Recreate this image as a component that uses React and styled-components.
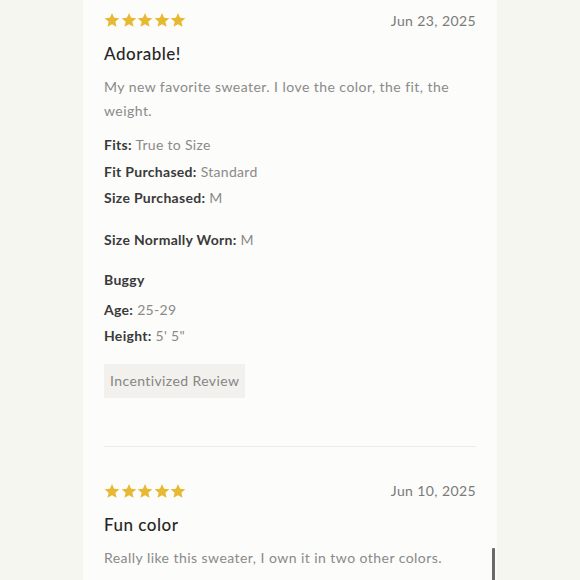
import React from "react";
import styled, { createGlobalStyle } from "styled-components";

const GlobalStyle = createGlobalStyle`
  html, body {
    margin: 0;
    padding: 0;
    background: #f6f6f1;
  }
  body {
    font-family: Lato, "Open Sans", sans-serif;
    overflow: hidden;
  }
`;

const reviews = [
  {
    date: "Jun 23, 2025",
    title: "Adorable!",
    body: "My new favorite sweater. I love the color, the fit, the weight.",
    fit: [
      ["Fits", "True to Size"],
      ["Fit Purchased", "Standard"],
      ["Size Purchased", "M"],
    ],
    worn: "M",
    author: "Buggy",
    age: "25-29",
    height: "5' 5\"",
    badge: "Incentivized Review",
  },
  {
    date: "Jun 10, 2025",
    title: "Fun color",
    body: "Really like this sweater, I own it in two other colors.",
  },
];

const Star = () => (
  <svg width="16" height="16" viewBox="0 0 24 24">
    <path
      d="M12 1.5l3.1 7.2 7.9.7-6 5.2 1.8 7.7L12 18.3l-6.8 4 1.8-7.7-6-5.2 7.9-.7z"
      fill="#e7b933"
    />
  </svg>
);

const Review = ({ review, first }) => (
  <Item $first={first}>
    <TopRow>
      <Stars>
        {[0, 1, 2, 3, 4].map((i) => (
          <Star key={i} />
        ))}
      </Stars>
      <DateText>{review.date}</DateText>
    </TopRow>
    <Title>{review.title}</Title>
    <Body>{review.body}</Body>
    {review.fit && (
      <>
        <Attrs $gap={9}>
          {review.fit.map(([k, v]) => (
            <Attr key={k}>
              <b>{k}:</b> <span>{v}</span>
            </Attr>
          ))}
        </Attrs>
        <Attrs $gap={15.5}>
          <Attr>
            <b>Size Normally Worn:</b> <span>{review.worn}</span>
          </Attr>
        </Attrs>
        <Attrs $gap={13.5}>
          <Attr>
            <b>{review.author}</b>
          </Attr>
        </Attrs>
        <Attrs $gap={3}>
          <Attr>
            <b>Age:</b> <span>{review.age}</span>
          </Attr>
          <Attr>
            <b>Height:</b> <span>{review.height}</span>
          </Attr>
        </Attrs>
        <Badge>{review.badge}</Badge>
      </>
    )}
  </Item>
);

const App = () => (
  <>
    <GlobalStyle />
    <Page>
      <Card>
        {reviews.map((r, i) => (
          <Review key={r.date} review={r} first={i === 0} />
        ))}
      </Card>
      <ScrollThumb />
    </Page>
  </>
);

const Page = styled.div`
  position: relative;
  width: 580px;
  height: 580px;
  overflow: hidden;
  display: flex;
  justify-content: center;
`;

const Card = styled.div`
  width: 414px;
  box-sizing: border-box;
  padding: 10px 21px 0 21px;
  background: #fcfcfa;
  color: #2a2a2a;
`;

const Item = styled.div`
  padding-top: ${(p) => (p.$first ? 0 : 34)}px;
  padding-bottom: 48px;
  border-bottom: ${(p) => (p.$first ? "1px solid #ebebe7" : "none")};
`;

const TopRow = styled.div`
  display: flex;
  justify-content: space-between;
  align-items: center;
  height: 20px;
`;

const Stars = styled.div`
  display: flex;
  gap: 0.5px;
  svg {
    display: block;
  }
`;

const DateText = styled.div`
  font-size: 14px;
  color: #7a7a7a;
  letter-spacing: 0.4px;
`;

const Title = styled.h3`
  margin: 12px 0 0;
  font-size: 17px;
  line-height: 24px;
  font-weight: 500;
  letter-spacing: 0.5px;
  color: #262626;
`;

const Body = styled.p`
  margin: 9px 0 0;
  font-size: 14px;
  line-height: 24px;
  color: #8a8a8a;
  letter-spacing: 0.45px;
`;

const Attrs = styled.div`
  margin-top: ${(p) => p.$gap}px;
`;

const Attr = styled.div`
  font-size: 14px;
  line-height: 26.5px;
  letter-spacing: 0.3px;
  b {
    font-weight: 700;
    color: #3a3a3a;
  }
  span {
    color: #8a8a8a;
  }
`;

const Badge = styled.div`
  display: inline-block;
  margin-top: 14px;
  padding: 0 6px;
  height: 34px;
  line-height: 34px;
  background: #f3f1ed;
  font-size: 14px;
  color: #858585;
  letter-spacing: 0.4px;
`;

const ScrollThumb = styled.div`
  position: absolute;
  left: 492px;
  top: 548px;
  width: 3px;
  height: 40px;
  background: #6a6a6a;
  border-radius: 1px;
`;

export default App;
